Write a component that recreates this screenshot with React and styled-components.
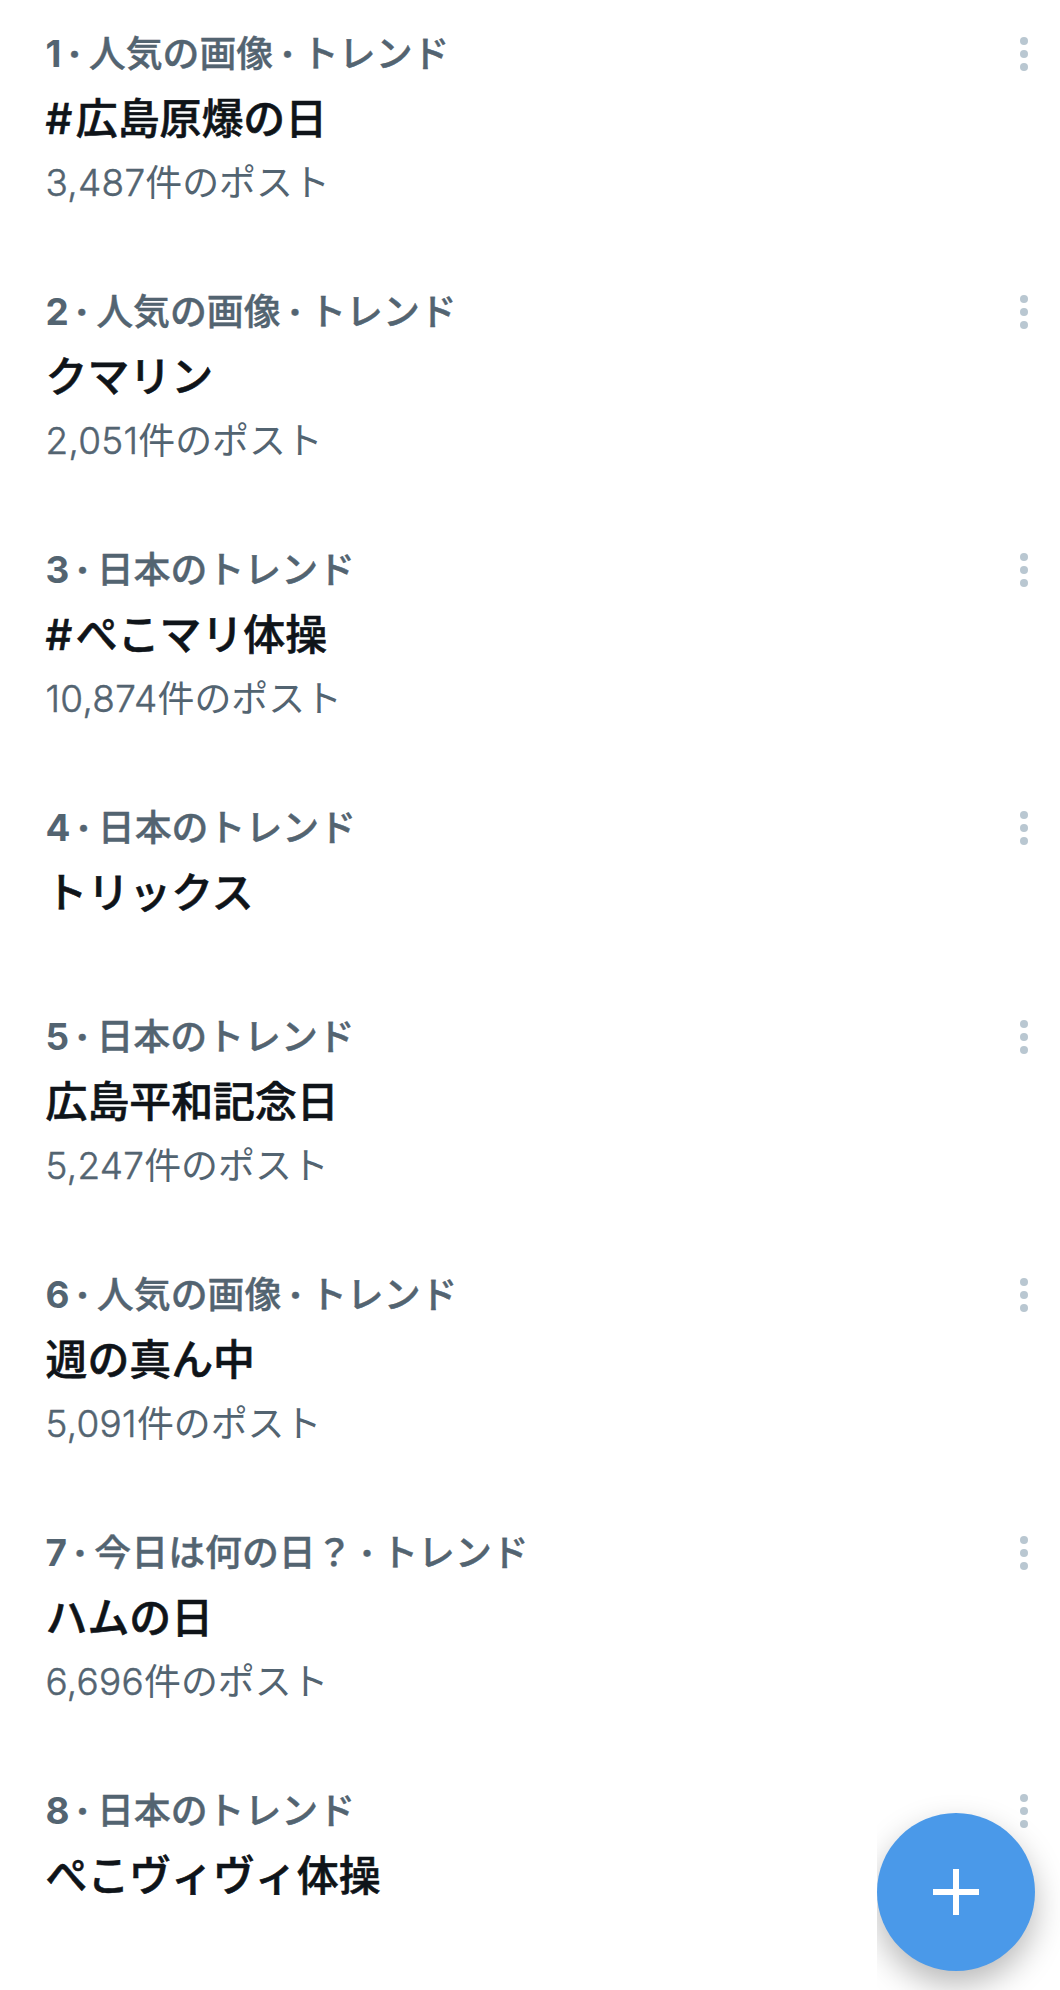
import React from 'react';
import styled, { createGlobalStyle } from 'styled-components';

const GlobalStyle = createGlobalStyle`
  body {
    margin: 0;
    background: #fff;
    font-family: Inter, 'Noto Sans CJK JP', sans-serif;
  }
`;

const Page = styled.main`
  height: 1990px;
  overflow: hidden;
  background: #fff;
`;

const Trend = styled.article`
  display: flex;
  justify-content: space-between;
  box-sizing: border-box;
  height: ${({ $short }) => ($short ? 209 : 258)}px;
  padding: 29px 32px 0 45.5px;
`;

const TrendText = styled.div`
  white-space: nowrap;
`;

const Context = styled.div`
  height: 49px;
  line-height: 49px;
  font-size: 36.9px;
  font-weight: 500;
  color: #536471;
  -webkit-text-stroke: 0.4px #536471;
`;

const Rank = styled.span`
  font-weight: 700;
  letter-spacing: -1.2px;
  -webkit-text-stroke: 0;
`;

const Separator = styled.span`
  display: inline-block;
  width: 28.6px;
  font-weight: 800;
  text-align: center;
`;

const Title = styled.h2`
  height: 59px;
  margin: 11px 0 0;
  line-height: 59px;
  font-size: 41.9px;
  font-weight: 500;
  color: #0f1419;
  -webkit-text-stroke: 0.6px #0f1419;
`;

const Hash = styled.span`
  font-weight: 500;
  letter-spacing: 3.5px;
`;

const Count = styled.div`
  height: 49px;
  margin-top: 10px;
  line-height: 49px;
  font-size: 36.9px;
  color: #536471;
`;

const Digits = styled.span`
  font-weight: 300;
  letter-spacing: 0.3px;
  -webkit-text-stroke: 0.5px #536471;
`;

const MoreButton = styled.button`
  display: flex;
  flex-direction: column;
  align-items: center;
  gap: 5px;
  width: 8px;
  height: 34px;
  margin: 8px 0 0;
  padding: 0;
  border: 0;
  background: none;
`;

const Dot = styled.i`
  flex: none;
  width: 8px;
  height: 8px;
  border-radius: 50%;
  background: #b9c7d1;
`;

const FabArea = styled.div`
  position: absolute;
  left: 877px;
  top: 1780px;
  width: 183px;
  height: 210px;
  overflow: hidden;
`;

const Fab = styled.button`
  display: flex;
  align-items: center;
  justify-content: center;
  width: 158px;
  height: 158px;
  margin: 33px 0 0;
  padding: 0;
  border: 0;
  border-radius: 50%;
  background: #4a99e9;
  box-shadow: 0 14px 32px rgba(0, 0, 0, 0.28);
`;

const trends = [
  { context: ['人気の画像', 'トレンド'], title: '#広島原爆の日', count: '3,487' },
  { context: ['人気の画像', 'トレンド'], title: 'クマリン', count: '2,051' },
  { context: ['日本のトレンド'], title: '#ぺこマリ体操', count: '10,874' },
  { context: ['日本のトレンド'], title: 'トリックス' },
  { context: ['日本のトレンド'], title: '広島平和記念日', count: '5,247' },
  { context: ['人気の画像', 'トレンド'], title: '週の真ん中', count: '5,091' },
  { context: ['今日は何の日？', 'トレンド'], title: 'ハムの日', count: '6,696' },
  { context: ['日本のトレンド'], title: 'ぺこヴィヴィ体操' },
];

const App = () => (
  <>
    <GlobalStyle />
    <Page>
      {trends.map(({ context, title, count }, index) => (
        <Trend key={title} $short={!count}>
          <TrendText lang='ja'>
            <Context>
              <Rank>{index + 1}</Rank>
              {context.map((label) => (
                <React.Fragment key={label}>
                  <Separator>·</Separator>
                  {label}
                </React.Fragment>
              ))}
            </Context>
            <Title>
              {title.startsWith('#') && <Hash>#</Hash>}
              {title.replace('#', '')}
            </Title>
            {count && (
              <Count>
                <Digits>{count}</Digits>
                件のポスト
              </Count>
            )}
          </TrendText>
          <MoreButton aria-label='もっと見る'>
            <Dot />
            <Dot />
            <Dot />
          </MoreButton>
        </Trend>
      ))}
    </Page>
    <FabArea>
      <Fab aria-label='ポストする'>
        <svg width='46' height='46' viewBox='0 0 46 46'>
          <path d='M23 0v46M0 23h46' stroke='#fff' strokeWidth='6' />
        </svg>
      </Fab>
    </FabArea>
  </>
);

export default App;
